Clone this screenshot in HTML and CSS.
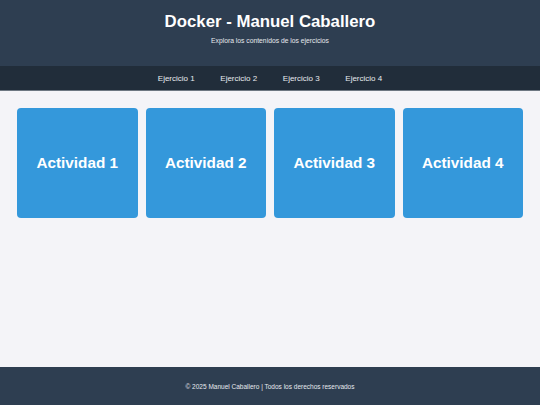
FILE: index.html
```html
<!DOCTYPE html>
<html lang="es">
<head>
<meta charset="utf-8">
<title>Docker - Manuel Caballero</title>
<link rel="stylesheet" href="styles.css">
</head>
<body>
<div class="page">
  <header class="site-header">
    <h1 class="title">Docker - Manuel Caballero</h1>
    <p class="subtitle">Explora los contenidos de los ejercicios</p>
  </header>
  <nav class="nav">
    <a class="nav-link" href="#">Ejercicio 1</a>
    <a class="nav-link" href="#">Ejercicio 2</a>
    <a class="nav-link" href="#">Ejercicio 3</a>
    <a class="nav-link" href="#">Ejercicio 4</a>
  </nav>
  <main class="main">
    <div class="cards">
      <div class="card">Actividad 1</div>
      <div class="card">Actividad 2</div>
      <div class="card">Actividad 3</div>
      <div class="card">Actividad 4</div>
    </div>
  </main>
  <footer class="footer">© 2025 Manuel Caballero | Todos los derechos reservados</footer>
</div>
</body>
</html>
```

FILE: styles.css
```css
* { box-sizing: border-box; }
html, body { margin: 0; padding: 0; }
body {
  font-family: "Liberation Sans", Arial, sans-serif;
  background: #f4f4f8;
  color: #333;
}
.page {
  display: flex;
  flex-direction: column;
  height: 405px;
}
.site-header {
  background: #2e3e51;
  color: #fff;
  height: 66px;
  display: flex;
  flex-direction: column;
  align-items: center;
  padding-top: 12px;
}
.title {
  margin: 0;
  font-size: 16.8px;
  line-height: 20px;
  font-weight: bold;
}
.subtitle {
  margin: 0;
  margin-top: 5px;
  font-size: 6.75px;
  line-height: 8px;
  color: #e6e9ee;
}
.nav {
  background: #212d3a;
  height: 25px;
  display: flex;
  justify-content: center;
  align-items: center;
  border-bottom: 1px solid #6d7782;
}
.nav-link {
  color: #e8ebef;
  text-decoration: none;
  font-size: 8px;
  margin: 0 12.8px;
}
.main {
  flex: 1;
  padding: 17px 17px;
}
.cards {
  display: grid;
  grid-template-columns: repeat(4, 1fr);
  gap: 8px;
}
.card {
  background: #3498db;
  color: #fff;
  height: 110px;
  border-radius: 4px;
  display: flex;
  align-items: center;
  justify-content: center;
  font-weight: bold;
  font-size: 15.3px;
}
.footer {
  background: #2e3e51;
  color: #e6e9ee;
  height: 38px;
  display: flex;
  align-items: center;
  justify-content: center;
  font-size: 6.5px;
}
```
